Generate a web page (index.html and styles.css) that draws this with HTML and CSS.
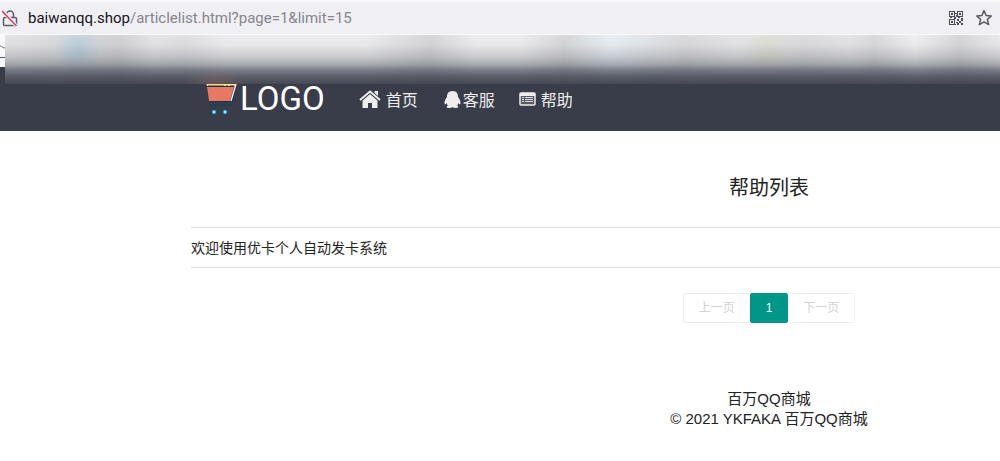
FILE: index.html
```
<!DOCTYPE html>
<html lang="zh">

<head>
    <meta charset="UTF-8">
    <title>帮助列表</title>
    <link rel="stylesheet" href="styles.css">
</head>

<body>

    <div class="browser">
        <div class="urlbar">
            <svg class="lock" viewBox="0 0 16 18" width="16" height="18">
                <path d="M4.500 8V5.500a3.500 3.500 0 0 1 7 0V8M3 8.500h10q1.500 0 1.500 1.500v5.500q0 1-1 1h-11q-1 0-1-1V10q0-1.500 1.500-1.500z" fill="none" stroke="#5b5b66" stroke-width="1.500" />
                <path d="M1 2.500l13 14" stroke="#f0eff4" stroke-width="3.500" />
                <path d="M0 2l14 14.500" stroke="#e22850" stroke-width="1.300" />
            </svg>
            <p class="url"><span class="domain">baiwanqq.shop</span>/articlelist.html?page=1&amp;limit=15</p>
            <svg class="qr" viewBox="0 0 14 14" width="14" height="14" fill="#4a4a54">
                <path fill-rule="evenodd" d="M0 0h6v6H0zM1 1v4h4V1zM8 0h6v6H8zM9 1v4h4V1zM0 8h6v6H0zM1 9v4h4V9zM2 2h2v2H2zM10 2h2v2h-2zM2 10h2v2H2z" />
                <path d="M6 2h2v1H6zM7 4h1v2H7zM1 6h2v1H1zM5 6h2v2H5zM9 6h2v1H9zM12 7h2v1h-2zM8 8h2v2H8zM12 8h2v2h-2zM10 10h2v2h-2zM7 11h2v1H7zM8 12h2v2H8zM12 12h2v2h-2zM6 13h1v1H6z" />
            </svg>
            <svg class="star" viewBox="0 0 18 18" width="18" height="18">
                <path d="M9 1.600l2.100 4.800 5.200.5-3.900 3.500 1.200 5.200L9 12.900l-4.600 2.700 1.200-5.200L1.700 6.900l5.200-.5z" fill="none" stroke="#5b5b66" stroke-width="1.500" stroke-linejoin="round" />
            </svg>
        </div>
        <div class="bookmarks">
            <svg viewBox="0 0 6 24" width="6" height="24">
                <path d="M0 3c2 0 2 2 6 2M0 14.500h6" fill="none" stroke="#5b5b66" />
            </svg>
        </div>
        <div class="haze"></div>
    </div>

    <header>
        <nav class="container">
            <a class="logo" href="#">
                <svg viewBox="0 0 34 40" width="34" height="40">
                    <path d="M0 3h31l-4 20H3z" fill="#17354d" />
                    <path d="M0 4h30l-1 3H1z" fill="#ffe082" />
                    <path d="M2 7h16M20 7h2M24 7h4" stroke="#17354d" />
                    <path d="M1 8h27l-4 14H3z" fill="#e97862" />
                    <path d="M30 5l-5 17" stroke="#fff" stroke-width="1.300" />
                    <path d="M3 26h23" stroke="#17405c" />
                    <circle cx="8" cy="33" r="2.500" fill="#4fc3e8" stroke="#17405c" />
                    <circle cx="19" cy="33" r="2.500" fill="#4fc3e8" stroke="#17405c" />
                    <path d="M8 32v2M19 32v2" stroke="#fff" />
                </svg>
                <span>LOGO</span>
            </a>
            <a class="link home" href="#">
                <svg viewBox="0 0 22 18" width="22" height="18" fill="#eee">
                    <path d="M11 4l7.500 6.500V18H13v-5H9v5H3.500v-7.500z" />
                    <path d="M15.500 1H19v6l-3.500-3z" />
                    <path d="M1 10L11 1.500 21 10" fill="none" stroke="#393d49" stroke-width="3.500" />
                    <path d="M1 10L11 1.500 21 10" fill="none" stroke="#eee" stroke-width="2" />
                </svg>
                <span>首页</span>
            </a>
            <a class="link service" href="#">
                <svg viewBox="0 0 17 17" width="17" height="17" fill="#eee">
                    <path d="M8.500 0C4.500 0 2.800 2.800 3 6 1.500 8 .2 10.500.5 13c.2 1 1.300.3 2-.9.2 1 .7 1.700 1.400 2.300-2.500 1.600-.5 2.500 1.700 2.500 1.400 0 2.200-.3 2.900-.9.700.6 1.500.9 2.900.9 2.200 0 4.200-.9 1.700-2.500.7-.6 1.200-1.300 1.400-2.300.7 1.200 1.800 1.900 2 .9.300-2.500-1-5-2.500-7C14.200 2.800 12.500 0 8.500 0z" />
                </svg>
                <span>客服</span>
            </a>
            <a class="link help" href="#">
                <svg viewBox="0 0 17 14" width="17" height="14">
                    <rect x="1" y="1" width="15" height="12" rx="1" fill="#555a66" stroke="#eee" stroke-width="1.500" />
                    <path d="M1 2.500h15" stroke="#eee" stroke-width="3" />
                    <path d="M3 5.500h2M3 7.500h2M3 9.500h2M6 5.500h8M6 7.500h8M6 9.500h8" stroke="#ddd" />
                </svg>
                <span>帮助</span>
            </a>
        </nav>
    </header>

    <main class="container">
        <h1>帮助列表</h1>
        <ul class="list">
            <li><a href="#">欢迎使用优卡个人自动发卡系统</a></li>
        </ul>
        <div class="pages">
            <button disabled>上一页</button>
            <button class="current">1</button>
            <button disabled>下一页</button>
        </div>
    </main>

    <footer class="container">
        <p>百万QQ商城</p>
        <p>© 2021 YKFAKA 百万QQ商城</p>
    </footer>

</body>

</html>
```
FILE: styles.css
```
* {
    box-sizing: border-box;
}

body {
    margin: 0;
    overflow-x: hidden;
    background-color: white;
    color: #222;
    font-family: "Liberation Sans", "Noto Sans CJK SC", sans-serif;
    font-size: 14px;
}

h1, p, ul {
    margin: 0;
    padding: 0;
}

a {
    color: inherit;
    text-decoration: none;
}

.container {
    width: 1156px;
    margin-left: 191px;
}

.browser {
    position: relative;
    background-color: #f9f9fb;
}

.urlbar {
    display: flex;
    align-items: center;
    height: 34px;
    padding: 0 7px 0 2px;
    background-color: #f0eff4;
    border-top: 2px solid #f9f9fb;
    border-radius: 0 4px 4px 0;
}

.url {
    flex: 1;
    margin-left: 10px;
    color: #85858c;
    font-family: Roboto, sans-serif;
    font-size: 15px;
    line-height: 20px;
}

.domain {
    color: #15141a;
}

.star {
    margin-left: 12px;
}

.bookmarks {
    height: 33px;
    padding-top: 9px;
}

.bookmarks svg {
    display: block;
}

/* frosted strip over the bookmarks and the top of the header */
.haze {
    position: absolute;
    top: 35px;
    left: 5px;
    right: 0;
    height: 49px;
    background:
        radial-gradient(ellipse 30px 14px at 210px 49px, rgba(170, 110, 90, 0.3), transparent),
        linear-gradient(rgba(57, 61, 73, 0) 0%, rgba(57, 61, 73, 0.03) 20%, rgba(57, 61, 73, 0.2) 45%, rgba(57, 61, 73, 0.38) 60%, rgba(57, 61, 73, 0.64) 72%, rgba(57, 61, 73, 0.82) 86%, rgba(57, 61, 73, 0.93) 100%),
        radial-gradient(ellipse 24px 30px at 73px 14px, rgba(180, 208, 226, 0.85), transparent),
        radial-gradient(ellipse 22px 26px at 763px 14px, rgba(220, 222, 200, 0.7), transparent),
        linear-gradient(90deg, #e3e3e5 0, #dcdcde 50px, #d2d2d4 115px, #e5e5e7 150px, #dfdfe2 180px, #ededef 220px, #ededef 360px, #d6d6d8 425px, #ededef 470px, #ededef 515px, #d7d7d9 560px, #e9eff5 605px, #dadadc 680px, #e5e5e7 730px, #dcdcde 800px, #e4e4e6 845px, #dadadc 870px, #f0f0f2 910px, #d7d7d9 955px, #eaeaec 995px);
}

header {
    background-color: #393d49;
}

header nav {
    display: flex;
    align-items: center;
    height: 64px;
    color: #eee;
}

.logo, .link {
    display: flex;
    align-items: center;
}

.logo {
    margin-left: 15px;
    color: white;
    font-family: Roboto, sans-serif;
    font-size: 33px;
    line-height: 36px;
}

.link {
    gap: 5px;
    font-size: 16px;
}

.home {
    margin-left: 34px;
}

.service {
    margin-left: 26px;
    gap: 2px;
}

.help {
    margin-left: 24px;
}

h1 {
    padding: 42px 0 23px;
    font-size: 20px;
    font-weight: normal;
    line-height: 31px;
    text-align: center;
}

.list {
    list-style: none;
    border-top: 1px solid #ddd;
}

.list li {
    border-bottom: 1px solid #ddd;
    line-height: 20px;
    padding: 10px 0 9px;
}

.pages {
    display: flex;
    justify-content: center;
    margin-top: 25px;
}

.pages button {
    height: 30px;
    padding: 0 15px;
    border: 1px solid #eee;
    background-color: white;
    color: #d2d2d2;
    font-family: inherit;
    font-size: 12px;
    line-height: 26px;
}

.pages button:first-child {
    border-right: 0;
    border-radius: 2px 0 0 2px;
}

.pages button:last-child {
    border-left: 0;
    border-radius: 0 2px 2px 0;
}

.pages .current {
    padding: 0 15px;
    border-color: #009688;
    border-radius: 2px;
    background-color: #009688;
    color: white;
}

footer {
    padding: 66px 0 32px;
    font-size: 15px;
    line-height: 20px;
    text-align: center;
}
```
